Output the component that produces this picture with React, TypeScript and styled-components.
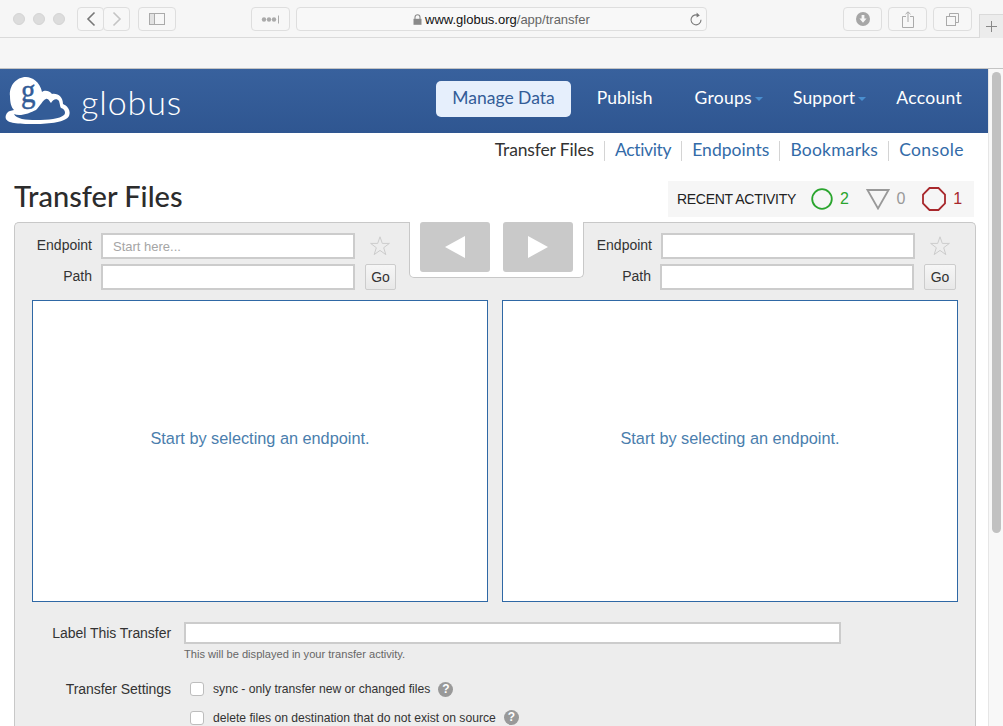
import React from "react";
import styled, { createGlobalStyle } from "styled-components";

const GlobalStyle = createGlobalStyle`
  html, body {
    margin: 0;
    padding: 0;
    background: #fff;
    overflow: hidden;
  }
  * {
    box-sizing: border-box;
  }
`;

const Root = styled.div`
  width: 1003px;
  height: 726px;
  overflow: hidden;
  display: flex;
  flex-direction: column;
  font-family: "Liberation Sans", Arial, sans-serif;
  color: #333;
`;

/* browser chrome */
const Toolbar = styled.div`
  height: 38px;
  flex: none;
  display: flex;
  background: #f6f6f6;
  border-bottom: 1px solid #dadada;
  padding: 7px 0 0 13px;
`;

const Lights = styled.div`
  display: flex;
  gap: 8px;
  padding-top: 6px;
  margin-right: 12px;
`;

const Light = styled.span`
  width: 12px;
  height: 12px;
  border-radius: 50%;
  background: #dcdcdc;
  border: 1px solid #d4d4d4;
`;

const ChromeButton = styled.div<{ $w: number; $ml?: number }>`
  width: ${(p) => p.$w}px;
  height: 24px;
  margin-left: ${(p) => p.$ml ?? 0}px;
  flex: none;
  border: 1px solid #dedede;
  border-radius: 4px;
  display: flex;
  align-items: center;
  justify-content: center;
  background: #f7f7f7;
`;

const AddressBar = styled.div`
  width: 411px;
  height: 24px;
  margin-left: 6px;
  flex: none;
  border: 1px solid #dedede;
  border-radius: 4px;
  background: #f8f8f8;
  display: flex;
  align-items: center;
  padding-left: 116px;
  font-size: 13px;
  color: #666;
  white-space: nowrap;
`;

const Host = styled.span`
  color: #111;
  margin-left: 3px;
`;

const Reload = styled.svg`
  margin-left: auto;
  margin-right: 3px;
`;

const NewTab = styled.div`
  width: 24px;
  height: 24px;
  margin: 7px 0 0 7px;
  flex: none;
  background: #ececec;
  border: 1px solid #dadada;
  border-right: none;
  border-bottom: none;
  display: flex;
  align-items: center;
  justify-content: center;
`;

const TabBar = styled.div`
  height: 31px;
  flex: none;
  background: #f6f6f6;
  border-bottom: 1px solid #c4c4c4;
`;

const Viewport = styled.div`
  flex: 1;
  min-height: 0;
  display: flex;
`;

const Content = styled.div`
  width: 988px;
  flex: none;
  background: #fff;
`;

const ScrollTrack = styled.div`
  width: 15px;
  flex: none;
  background: #f8f8f8;
  border-left: 1px solid #e6e6e6;
  padding: 3px 2px 0 3px;
`;

const ScrollThumb = styled.div`
  width: 9px;
  height: 461px;
  border-radius: 5px;
  background: #c1c1c1;
`;

/* site header */
const Header = styled.header`
  height: 64px;
  background: linear-gradient(#38619d, #2f5691);
  display: flex;
  align-items: center;
  justify-content: space-between;
  padding: 0 10px 0 5px;
`;

const Brand = styled.div`
  display: flex;
  align-items: center;
`;

const Wordmark = styled.span`
  font-family: Lato, sans-serif;
  font-weight: 300;
  font-size: 34px;
  letter-spacing: 0.9px;
  color: #fff;
  margin-left: 9px;
`;

const Nav = styled.nav`
  display: flex;
  align-items: center;
  gap: 10px;
  padding-bottom: 4px;
`;

const NavItem = styled.a<{ $active?: boolean; $caret?: boolean; $ls?: number }>`
  height: 36px;
  display: flex;
  align-items: center;
  padding: 0 ${(p) => (p.$caret ? 4 : 16)}px 3px 16px;
  border-radius: 5px;
  font-family: Lato, sans-serif;
  font-size: 17.5px;
  letter-spacing: ${(p) => p.$ls ?? 0}px;
  color: ${(p) => (p.$active ? "#335c97" : "#fff")};
  background: ${(p) => (p.$active ? "#e6effc" : "transparent")};
  white-space: nowrap;
`;

const Caret = styled.span`
  width: 0;
  height: 0;
  margin: 3px 0 0 3px;
  border-left: 4.5px solid transparent;
  border-right: 4.5px solid transparent;
  border-top: 4px solid #4a8fd0;
`;

const SubNav = styled.div`
  height: 32px;
  display: flex;
  justify-content: flex-end;
  padding: 8px 14px 0 0;
`;

const SubItem = styled.a<{ $current?: boolean; $first?: boolean; $ls?: number }>`
  height: 20px;
  display: flex;
  align-items: center;
  padding: 0 10px 3px;
  border-left: ${(p) => (p.$first ? "none" : "1px solid #d4d4d4")};
  font-family: Lato, sans-serif;
  font-size: 17.5px;
  letter-spacing: ${(p) => p.$ls ?? 0}px;
  color: ${(p) => (p.$current ? "#333" : "#336ba8")};
  white-space: nowrap;
`;

const TitleRow = styled.div`
  display: flex;
  align-items: center;
  justify-content: space-between;
  padding: 16px 14px 5px;
`;

const Title = styled.h1`
  margin: 0 0 6px;
  font-family: Lato, sans-serif;
  font-size: 29px;
  line-height: 30px;
  font-weight: 500;
  color: #2c2c2c;
`;

const Recent = styled.div`
  width: 306px;
  height: 36px;
  background: #f6f6f6;
  display: flex;
  align-items: center;
  padding-left: 9px;
  font-size: 14px;
  letter-spacing: -0.3px;
  color: #222;
  white-space: nowrap;
`;

const StatusIcon = styled.svg<{ $ml: number }>`
  margin-left: ${(p) => p.$ml}px;
  flex: none;
`;

const StatusCount = styled.span<{ $color: string }>`
  margin-left: 7px;
  font-size: 16px;
  color: ${(p) => p.$color};
`;

/* transfer panel */
const Panel = styled.div`
  width: 962px;
  margin-left: 14px;
  height: 600px;
  display: flex;
  flex-direction: column;
`;

const PanelTop = styled.div`
  display: grid;
  grid-template-columns: 395px 175px 392px;
  height: 78px;
`;

const Side = styled.div<{ $right?: boolean }>`
  background: #ededed;
  border-top: 1px solid #c8c8c8;
  border-left: ${(p) => (p.$right ? "none" : "1px solid #c8c8c8")};
  border-right: ${(p) => (p.$right ? "1px solid #c8c8c8" : "none")};
  border-radius: ${(p) => (p.$right ? "0 5px 0 0" : "5px 0 0 0")};
  padding-top: 10px;
  display: flex;
  flex-direction: column;
  gap: 5px;
`;

const NotchWrap = styled.div`
  background: #ededed;
`;

const Notch = styled.div`
  height: 56px;
  background: #fff;
  border: 1px solid #c8c8c8;
  border-top: none;
  border-radius: 0 0 5px 5px;
  display: flex;
  gap: 13px;
  padding-left: 10px;
`;

const ArrowButton = styled.button`
  width: 70px;
  height: 50px;
  border: none;
  border-radius: 3px;
  background: #c9c9c9;
  padding: 0;
  display: flex;
  align-items: center;
  justify-content: center;
`;

const FieldRow = styled.div`
  display: flex;
  align-items: center;
  height: 26px;
`;

const FieldLabel = styled.label<{ $w: number }>`
  width: ${(p) => p.$w}px;
  flex: none;
  text-align: right;
  font-size: 14px;
  color: #333;
  margin-right: 9px;
  padding-bottom: 2px;
`;

const TextField = styled.input<{ $w: number }>`
  width: ${(p) => p.$w}px;
  height: 26px;
  flex: none;
  border: 2px solid #ccc;
  background: #fff;
  padding: 0 10px;
  font-family: inherit;
  font-size: 13px;
  outline: none;

  &::placeholder {
    color: #a5a5a5;
    opacity: 1;
  }
`;

const Star = styled.svg`
  margin-left: 15px;
  flex: none;
`;

const GoButton = styled.button<{ $w: number }>`
  width: ${(p) => p.$w}px;
  height: 26px;
  margin-left: 10px;
  flex: none;
  border: 1px solid #ccc;
  border-radius: 2px;
  background: linear-gradient(#f6f6f6, #e8e8e8);
  padding: 0;
  font-family: inherit;
  font-size: 14px;
  color: #333;
`;

const PanelBody = styled.div`
  flex: 1;
  background: #ededed;
  border-left: 1px solid #c8c8c8;
  border-right: 1px solid #c8c8c8;
  padding: 0 17px;
`;

const Lists = styled.div`
  display: grid;
  grid-template-columns: 456px 456px;
  gap: 14px;
`;

const ListBox = styled.div`
  height: 302px;
  background: #fff;
  border: 1px solid #2f68a5;
  display: flex;
  align-items: center;
  justify-content: center;
  padding-bottom: 26px;
  font-size: 16.3px;
  color: #4a7ead;
`;

const OptionRow = styled.div<{ $mt: number }>`
  display: flex;
  align-items: center;
  margin-top: ${(p) => p.$mt}px;
  margin-left: -17px;
`;

const OptionLabel = styled.label`
  width: 156px;
  flex: none;
  text-align: right;
  font-size: 14px;
  letter-spacing: -0.05px;
  color: #333;
`;

const LabelInput = styled.input`
  width: 657px;
  height: 22px;
  margin-left: 13px;
  border: 2px solid #ccc;
  background: #fff;
  outline: none;
`;

const Hint = styled.p`
  margin: 4px 0 0 152px;
  font-size: 11.1px;
  line-height: 13px;
  color: #666;
`;

const Check = styled.input<{ $ml: number }>`
  appearance: none;
  width: 14px;
  height: 14px;
  flex: none;
  margin: 0 9px 0 ${(p) => p.$ml}px;
  background: #fff;
  border: 1px solid #bdbdbd;
  border-radius: 3px;
`;

const CheckText = styled.span`
  font-size: 12.15px;
  color: #333;
  white-space: nowrap;
`;

const Help = styled.span`
  width: 15px;
  height: 15px;
  margin-left: 8px;
  flex: none;
  border-radius: 50%;
  background: #999;
  color: #fff;
  font-size: 12px;
  font-weight: 700;
  line-height: 15px;
  text-align: center;
`;

const StarIcon = () => (
  <Star width="20" height="20" viewBox="0 0 20 20">
    <polygon
      points="10,0.8 12.3,7.4 19.4,7.4 13.7,11.7 15.8,18.6 10,14.4 4.2,18.6 6.3,11.7 0.6,7.4 7.7,7.4"
      fill="none"
      stroke="#ccc"
      strokeWidth="1"
    />
  </Star>
);

const Logo = () => (
  <svg width="67" height="50" viewBox="5 6 67 50" overflow="visible">
    <path
      d="M10 41 C6 42 5 47 6 49 C8 53 16 54 35 54 C50 54 66 52 69 46 C71 41 68 36 63 34 C63 27 58 23 52 24 C49 20 44 20 42 22 C40 12 32 7 26 7 C16 7 9 16 10 26 C10 32 11 37 14 40 Z"
      fill="#fff"
    />
    <path
      d="M14 44 C20 47 30 43 36 40 C40 36 43 30 46 29 C48 28 50 32 51 33 C53 29 57 28 59 31 C60 34 60 37 61 38 C65 39 66 43 64 45 C60 49 48 50 36 50 C26 50 16 49 14 44 Z"
      fill="#335c97"
    />
    <text
      transform="translate(21 32) scale(0.85 1)"
      fontFamily="'Liberation Serif', serif"
      fontSize="34"
      stroke="#335c97"
      strokeWidth="0.5"
      fill="#335c97"
    >
      g
    </text>
  </svg>
);

const ChromeIcon = styled.svg`
  display: block;
`;

export default function App() {
  return (
    <Root>
      <GlobalStyle />
      <Toolbar>
        <Lights>
          <Light />
          <Light />
          <Light />
        </Lights>
        <ChromeButton $w={27}>
          <ChromeIcon width="10" height="16" viewBox="0 0 10 16">
            <path d="M8.5 1.5 L2 8 L8.5 14.5" fill="none" stroke="#777" strokeWidth="1.6" />
          </ChromeIcon>
        </ChromeButton>
        <ChromeButton $w={27} $ml={-1}>
          <ChromeIcon width="10" height="16" viewBox="0 0 10 16">
            <path d="M1.5 1.5 L8 8 L1.5 14.5" fill="none" stroke="#c4c4c4" strokeWidth="1.6" />
          </ChromeIcon>
        </ChromeButton>
        <ChromeButton $w={38} $ml={8}>
          <ChromeIcon width="16" height="12" viewBox="0 0 16 12">
            <rect x="0.5" y="0.5" width="15" height="11" fill="none" stroke="#aaa" />
            <rect x="1" y="1" width="4" height="10" fill="#e2e2e2" />
            <line x1="5.5" y1="0.5" x2="5.5" y2="11.5" stroke="#aaa" />
          </ChromeIcon>
        </ChromeButton>
        <ChromeButton $w={39} $ml={75}>
          <ChromeIcon width="20" height="9" viewBox="0 0 20 9">
            <circle cx="3" cy="4.5" r="2.2" fill="#aaa" />
            <circle cx="8" cy="4.5" r="2.2" fill="#aaa" />
            <circle cx="13" cy="4.5" r="2.2" fill="#aaa" />
            <line x1="17.5" y1="0.5" x2="17.5" y2="8.5" stroke="#aaa" />
          </ChromeIcon>
        </ChromeButton>
        <AddressBar>
          <ChromeIcon width="9" height="11" viewBox="0 0 9 11">
            <path d="M2 5 V3.2 a2.5 2.5 0 0 1 5 0 V5" fill="none" stroke="#8a8a8a" strokeWidth="1.1" />
            <rect x="0.5" y="4.8" width="8" height="6" fill="#8a8a8a" />
          </ChromeIcon>
          <Host>www.globus.org</Host>/app/transfer
          <Reload width="14" height="15" viewBox="0 0 14 15">
            <path d="M9.6 3.6 A5 5 0 1 0 12 7.8" fill="none" stroke="#777" strokeWidth="1.1" />
            <path d="M7.6 0.6 L10.8 3.4 L7.6 5.6 Z" fill="#777" />
          </Reload>
        </AddressBar>
        <ChromeButton $w={39} $ml={136}>
          <ChromeIcon width="14" height="14" viewBox="0 0 14 14">
            <circle cx="7" cy="7" r="7" fill="#a6a6a6" />
            <path d="M5.6 3 H8.4 V6.6 H10.6 L7 10.8 L3.4 6.6 H5.6 Z" fill="#f6f6f6" />
          </ChromeIcon>
        </ChromeButton>
        <ChromeButton $w={39} $ml={6}>
          <ChromeIcon width="12" height="17" viewBox="0 0 12 17">
            <path d="M4 5.5 H0.5 V16.5 H11.5 V5.5 H8" fill="none" stroke="#aaa" />
            <path d="M6 11 V1 M3.5 3.2 L6 0.8 L8.5 3.2" fill="none" stroke="#aaa" />
          </ChromeIcon>
        </ChromeButton>
        <ChromeButton $w={39} $ml={6}>
          <ChromeIcon width="13" height="13" viewBox="0 0 13 13">
            <path d="M3.5 3 V0.5 H12.5 V9.5 H10" fill="none" stroke="#aaa" />
            <rect x="0.5" y="3.5" width="9" height="9" fill="none" stroke="#aaa" />
          </ChromeIcon>
        </ChromeButton>
        <NewTab>
          <ChromeIcon width="11" height="11" viewBox="0 0 11 11">
            <path d="M5.5 0 V11 M0 5.5 H11" stroke="#888" strokeWidth="1" />
          </ChromeIcon>
        </NewTab>
      </Toolbar>
      <TabBar />
      <Viewport>
        <Content>
          <Header>
            <Brand>
              <Logo />
              <Wordmark>globus</Wordmark>
            </Brand>
            <Nav>
              <NavItem $active>Manage Data</NavItem>
              <NavItem>Publish</NavItem>
              <NavItem $caret $ls={0.3}>
                Groups
                <Caret />
              </NavItem>
              <NavItem $caret $ls={0.15}>
                Support
                <Caret />
              </NavItem>
              <NavItem $ls={0.3}>Account</NavItem>
            </Nav>
          </Header>
          <SubNav>
            <SubItem $current $first $ls={-0.15}>
              Transfer Files
            </SubItem>
            <SubItem $ls={-0.35}>Activity</SubItem>
            <SubItem $ls={0.05}>Endpoints</SubItem>
            <SubItem $ls={0.2}>Bookmarks</SubItem>
            <SubItem $ls={0.4}>Console</SubItem>
          </SubNav>
          <TitleRow>
            <Title>Transfer Files</Title>
            <Recent>
              RECENT ACTIVITY
              <StatusIcon $ml={15} width="22" height="22" viewBox="0 0 22 22">
                <circle cx="11" cy="11" r="9.8" fill="none" stroke="#2aa52e" strokeWidth="1.8" />
              </StatusIcon>
              <StatusCount $color="#2aa52e">2</StatusCount>
              <StatusIcon $ml={17} width="24" height="22" viewBox="0 0 24 22">
                <polygon points="1.5,2 22.5,2 12,20.5" fill="none" stroke="#999" strokeWidth="1.8" />
              </StatusIcon>
              <StatusCount $color="#999">0</StatusCount>
              <StatusIcon $ml={17} width="24" height="24" viewBox="0 0 24 24">
                <polygon
                  points="7.5,1 16.5,1 23,7.5 23,16.5 16.5,23 7.5,23 1,16.5 1,7.5"
                  fill="none"
                  stroke="#a8282c"
                  strokeWidth="1.8"
                />
              </StatusIcon>
              <StatusCount $color="#a8282c">1</StatusCount>
            </Recent>
          </TitleRow>
          <Panel>
            <PanelTop>
              <Side>
                <FieldRow>
                  <FieldLabel $w={77}>Endpoint</FieldLabel>
                  <TextField $w={254} placeholder="Start here..." />
                  <StarIcon />
                </FieldRow>
                <FieldRow>
                  <FieldLabel $w={77}>Path</FieldLabel>
                  <TextField $w={254} />
                  <GoButton $w={31}>Go</GoButton>
                </FieldRow>
              </Side>
              <NotchWrap>
                <Notch>
                  <ArrowButton>
                    <svg width="20" height="22" viewBox="0 0 20 22">
                      <polygon points="20,0 20,22 0,11" fill="#fff" />
                    </svg>
                  </ArrowButton>
                  <ArrowButton>
                    <svg width="20" height="22" viewBox="0 0 20 22">
                      <polygon points="0,0 0,22 20,11" fill="#fff" />
                    </svg>
                  </ArrowButton>
                </Notch>
              </NotchWrap>
              <Side $right>
                <FieldRow>
                  <FieldLabel $w={68}>Endpoint</FieldLabel>
                  <TextField $w={254} />
                  <StarIcon />
                </FieldRow>
                <FieldRow>
                  <FieldLabel $w={67}>Path</FieldLabel>
                  <TextField $w={254} />
                  <GoButton $w={32}>Go</GoButton>
                </FieldRow>
              </Side>
            </PanelTop>
            <PanelBody>
              <Lists>
                <ListBox>Start by selecting an endpoint.</ListBox>
                <ListBox>Start by selecting an endpoint.</ListBox>
              </Lists>
              <OptionRow $mt={20}>
                <OptionLabel>Label This Transfer</OptionLabel>
                <LabelInput />
              </OptionRow>
              <Hint>This will be displayed in your transfer activity.</Hint>
              <OptionRow $mt={20}>
                <OptionLabel>Transfer Settings</OptionLabel>
                <Check $ml={19} type="checkbox" />
                <CheckText>sync - only transfer new or changed files</CheckText>
                <Help>?</Help>
              </OptionRow>
              <OptionRow $mt={13}>
                <Check $ml={175} type="checkbox" />
                <CheckText>delete files on destination that do not exist on source</CheckText>
                <Help>?</Help>
              </OptionRow>
            </PanelBody>
          </Panel>
        </Content>
        <ScrollTrack>
          <ScrollThumb />
        </ScrollTrack>
      </Viewport>
    </Root>
  );
}
